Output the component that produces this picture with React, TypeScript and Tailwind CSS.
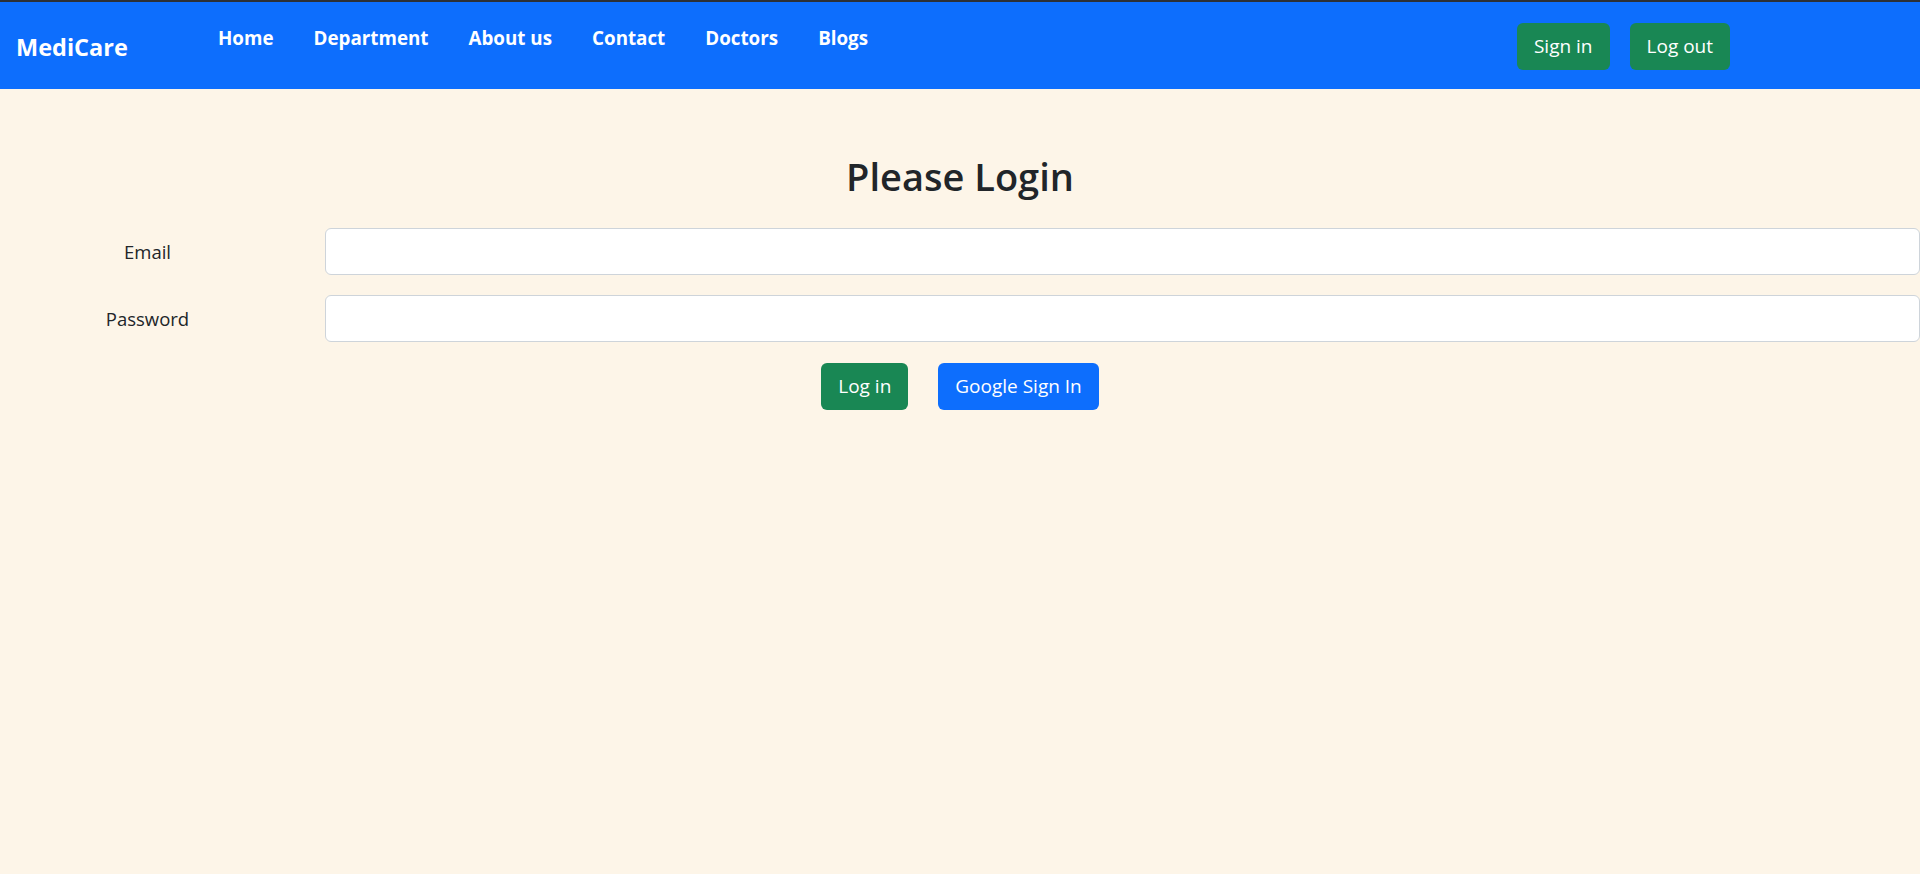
import React from "react";

export default function App() {
  const links = ["Home", "Department", "About us", "Contact", "Doctors", "Blogs"];
  return (
    <div
      className="min-h-screen bg-[#fdf5e8] text-[#212529]"
      style={{ fontFamily: '"Open Sans", "Noto Sans", sans-serif' }}
    >
      <div className="h-[2px] bg-[#2c3035]" />
      <nav className="h-[87px] bg-[#0d6efd] flex items-center">
        <div className="pl-[16px] w-[200px] text-white font-bold text-[23.5px] pt-[4px]">MediCare</div>
        <ul className="flex self-start pt-[22px] ml-[-2px]">
          {links.map((l) => (
            <li key={l}>
              <a href="#" className="block px-[20px] text-white font-bold text-[18.8px] leading-[28px]">
                {l}
              </a>
            </li>
          ))}
        </ul>
        <div className="ml-auto mr-[190px] flex gap-[20px] pt-[2px]">
          <button className="h-[47px] px-[17px] rounded-[6px] bg-[#198754] text-white text-[19px]">Sign in</button>
          <button className="h-[47px] px-[17px] rounded-[6px] bg-[#198754] text-white text-[19px]">Log out</button>
        </div>
      </nav>
      <main className="pt-[63px]">
        <h1 className="text-center text-[38px] font-semibold leading-[48px] mb-[28px]">Please Login</h1>
        <div className="flex flex-col gap-[20px]">
          <div className="flex items-center">
            <label className="w-[295px] text-center text-[18.5px]">Email</label>
            <input
              type="email"
              className="ml-[30px] flex-1 h-[47px] bg-white border border-[#ced4da] rounded-[6px] px-4 outline-none"
            />
          </div>
          <div className="flex items-center">
            <label className="w-[295px] text-center text-[18.5px]">Password</label>
            <input
              type="password"
              className="ml-[30px] flex-1 h-[47px] bg-white border border-[#ced4da] rounded-[6px] px-4 outline-none"
            />
          </div>
        </div>
        <div className="flex justify-center gap-[30px] mt-[21px]">
          <button className="h-[47px] px-[17px] rounded-[6px] bg-[#198754] text-white text-[19px]">Log in</button>
          <button className="h-[47px] px-[17px] rounded-[6px] bg-[#0d6efd] text-white text-[19px]">Google Sign In</button>
        </div>
      </main>
    </div>
  );
}
